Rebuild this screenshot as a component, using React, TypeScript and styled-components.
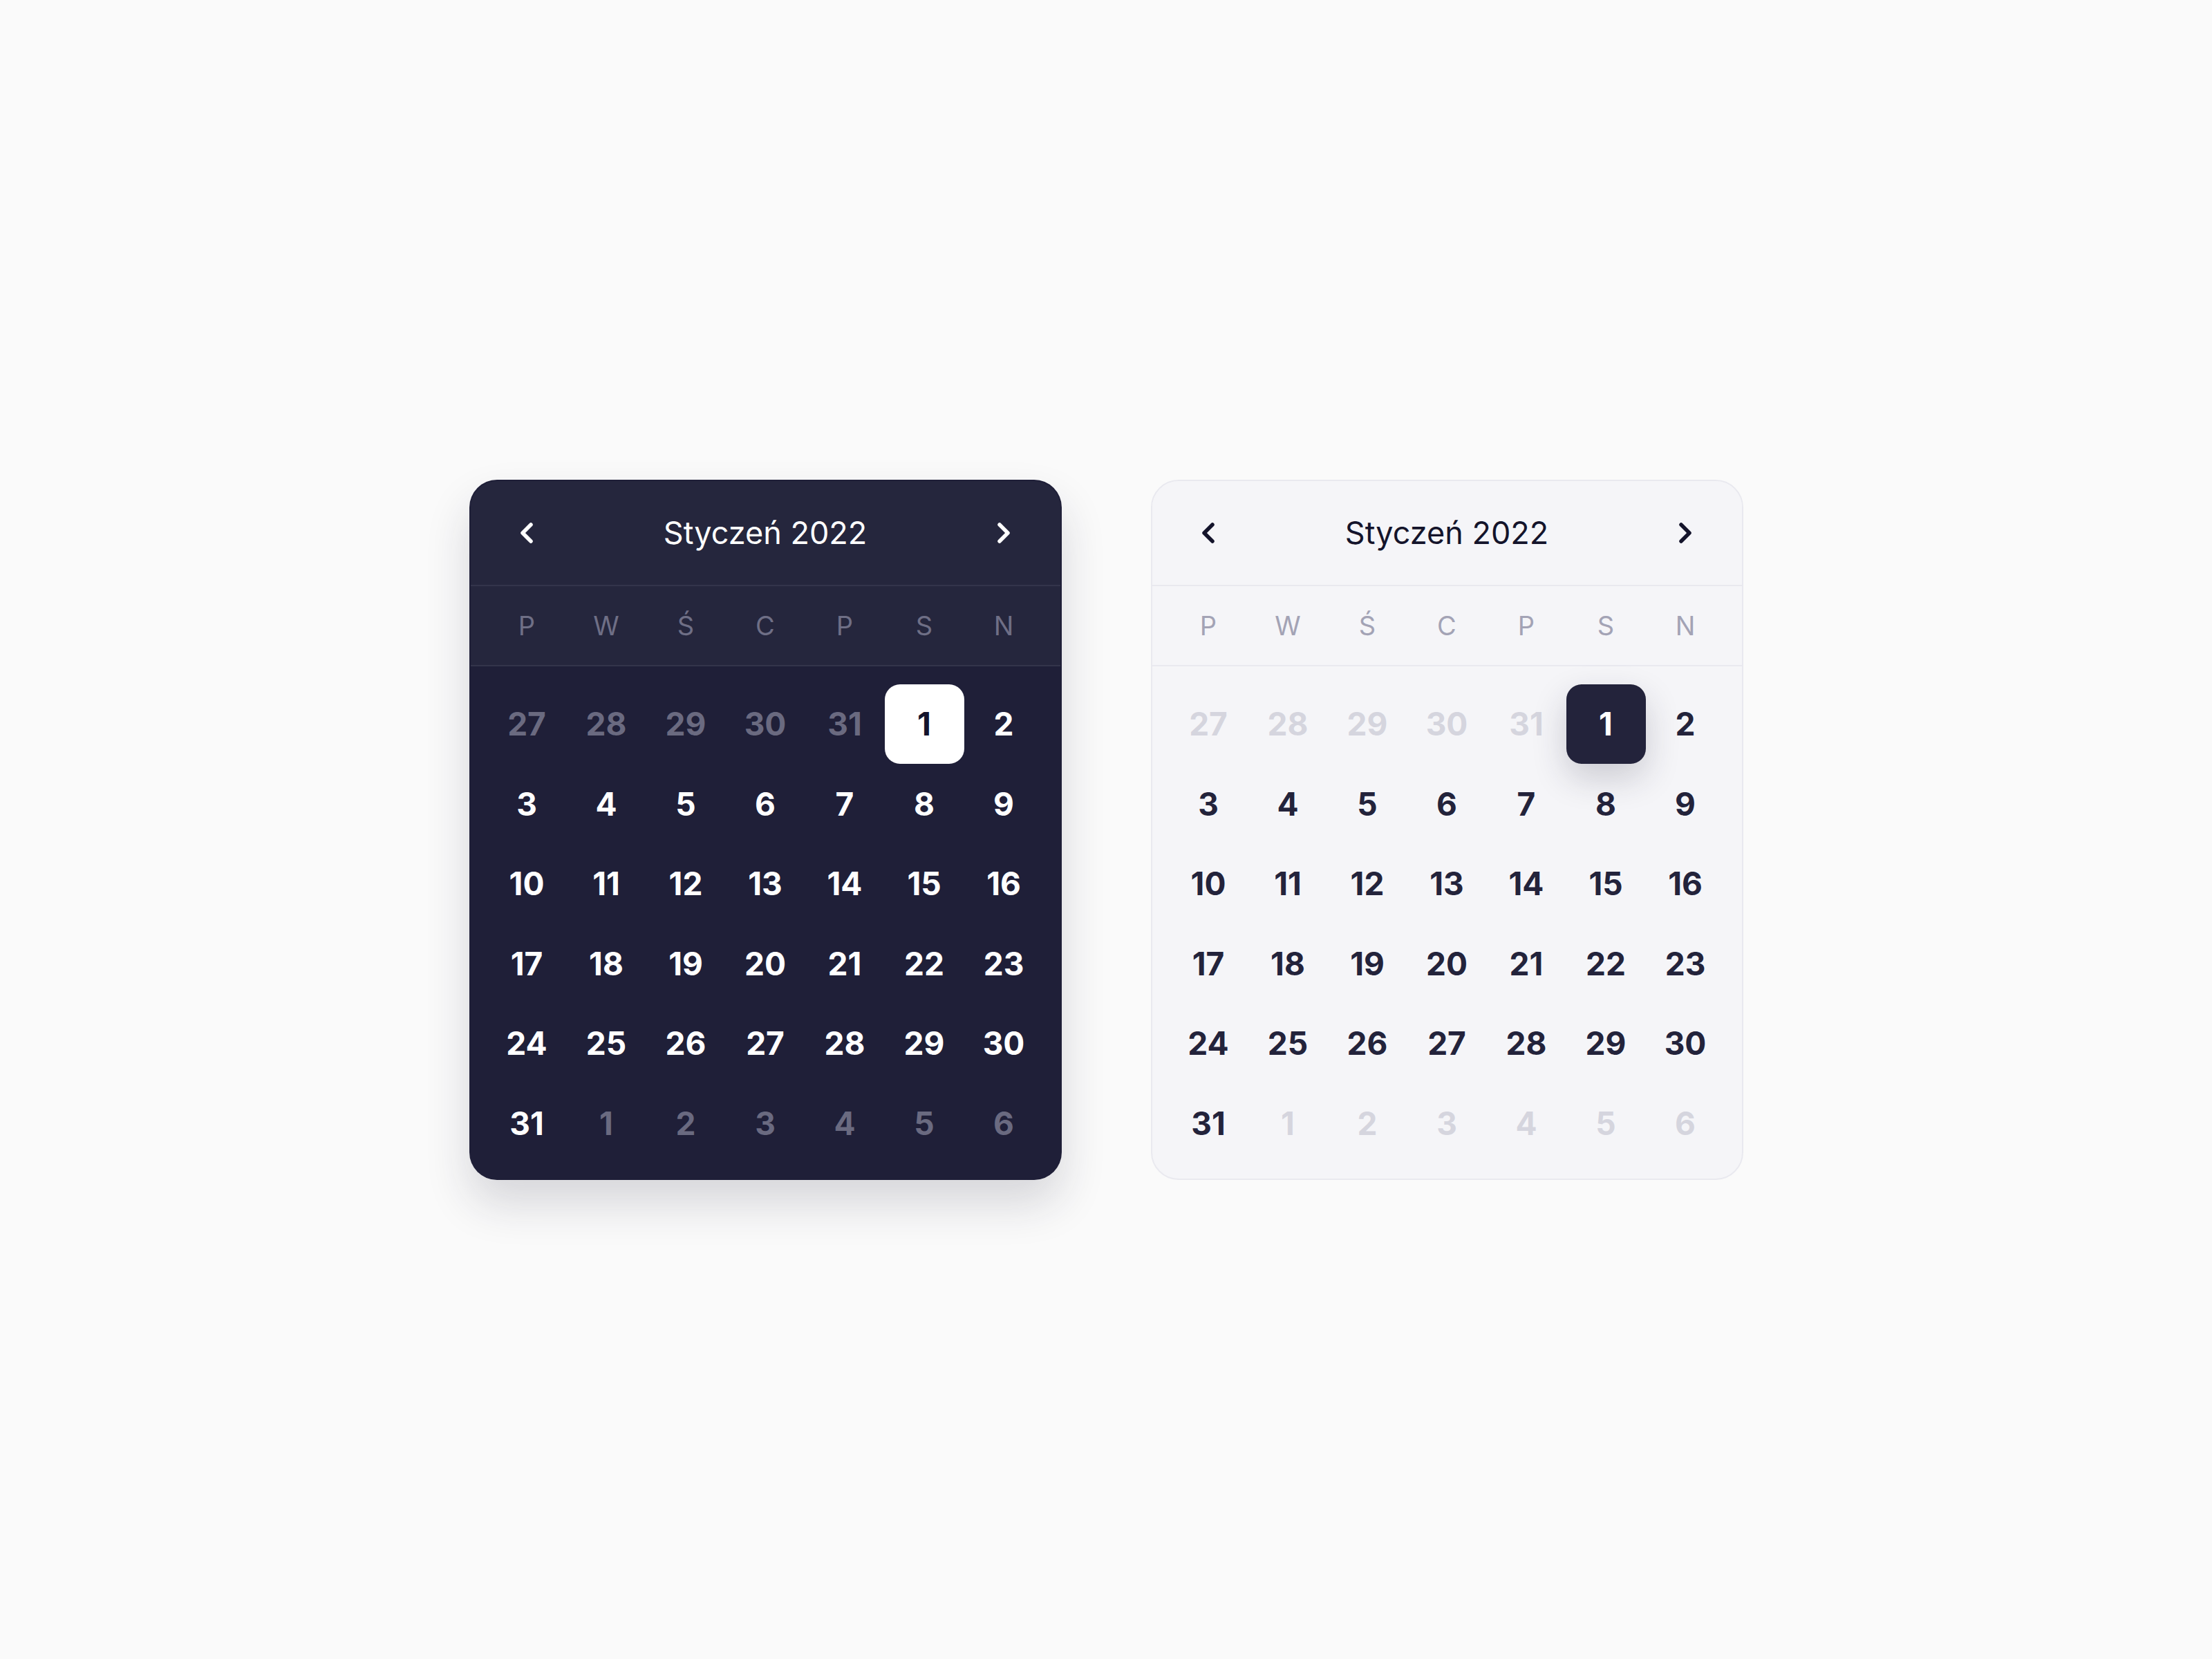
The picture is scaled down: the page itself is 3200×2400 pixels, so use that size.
import React from "react"
import styled, { createGlobalStyle, css } from "styled-components"

type Tone = "dark" | "light"

const palette = {
    dark: {
        card: "#1f1f38",
        head: "#25263d",
        line: "#33344b",
        edge: "transparent",
        title: "#ffffff",
        weekday: "#6f6f86",
        day: "#ffffff",
        muted: "#6a6a80",
        pickBg: "#ffffff",
        pickText: "#14142b",
        pickShadow: "none",
        shadow: "0 34px 64px rgba(31, 31, 56, 0.16)",
    },
    light: {
        card: "#f5f5f8",
        head: "#f5f5f8",
        line: "#e9e9ef",
        edge: "#e9e9ef",
        title: "#14142b",
        weekday: "#a3a3b5",
        day: "#23233b",
        muted: "#d5d5de",
        pickBg: "#23233b",
        pickText: "#ffffff",
        pickShadow: "0 20px 50px rgba(35, 35, 59, 0.2)",
        shadow: "none",
    },
}

const GlobalStyle = createGlobalStyle`
    html, body {
        margin: 0;
        padding: 0;
        background: #fafafa;
    }
    body {
        font-family: Inter, "Noto Sans", "Liberation Sans", sans-serif;
    }
`

const Page = styled.main`
    min-height: 100vh;
    display: flex;
    justify-content: center;
    align-items: center;
    gap: 129px;
`

const Card = styled.section<{ $tone: Tone }>`
    width: 857px;
    box-sizing: border-box;
    border-radius: 40px;
    overflow: hidden;
    ${({ $tone }) => css`
        background: ${palette[$tone].card};
        border: 2px solid ${palette[$tone].edge};
        box-shadow: ${palette[$tone].shadow};
    `}
`

const Header = styled.header<{ $tone: Tone }>`
    height: 150px;
    padding: 0 24px;
    display: flex;
    align-items: center;
    background: ${({ $tone }) => palette[$tone].head};
    border-bottom: 2px solid ${({ $tone }) => palette[$tone].line};
`

const NavButton = styled.button<{ $tone: Tone }>`
    width: 115px;
    height: 100px;
    padding: 0;
    border: none;
    background: none;
    display: flex;
    justify-content: center;
    align-items: center;
    color: ${({ $tone }) => palette[$tone].title};
    cursor: pointer;
`

const Title = styled.h2<{ $tone: Tone }>`
    flex: 1;
    margin: 0;
    text-align: center;
    font-size: 45px;
    font-weight: 400;
    color: ${({ $tone }) => palette[$tone].title};
`

const Weekdays = styled.div<{ $tone: Tone }>`
    height: 114px;
    padding: 0 24px;
    display: grid;
    grid-template-columns: repeat(7, 1fr);
    align-items: center;
    background: ${({ $tone }) => palette[$tone].head};
    border-bottom: 2px solid ${({ $tone }) => palette[$tone].line};
`

const Weekday = styled.span<{ $tone: Tone }>`
    text-align: center;
    font-size: 38px;
    font-weight: 400;
    color: ${({ $tone }) => palette[$tone].weekday};
`

const Days = styled.div`
    padding: 26px 24px 22px;
    display: grid;
    grid-template-columns: repeat(7, 1fr);
    grid-auto-rows: 115.5px;
`

const Day = styled.span<{ $tone: Tone; $muted?: boolean; $picked?: boolean }>`
    display: flex;
    justify-content: center;
    align-items: center;
    font-size: 46px;
    font-weight: 700;
    border-radius: 22px;
    color: ${({ $tone, $muted }) => ($muted ? palette[$tone].muted : palette[$tone].day)};
    ${({ $tone, $picked }) =>
        $picked &&
        css`
            background: ${palette[$tone].pickBg};
            color: ${palette[$tone].pickText};
            box-shadow: ${palette[$tone].pickShadow};
        `}
`

const Chevron = ({ dir }: { dir: "left" | "right" }) => (
    <svg width="20" height="32" viewBox="0 0 20 32" fill="none">
        <path
            d={dir === "left" ? "M16 4 L4 16 L16 28" : "M4 4 L16 16 L4 28"}
            stroke="currentColor"
            strokeWidth="5.5"
            strokeLinecap="round"
            strokeLinejoin="round"
        />
    </svg>
)

const weekdays = ["P", "W", "Ś", "C", "P", "S", "N"]

// styczeń 2022 starts on saturday, so the grid begins with the end of december
const cells = [
    ...[27, 28, 29, 30, 31].map((n) => ({ n, muted: true })),
    ...Array.from({ length: 31 }, (_, i) => ({ n: i + 1, muted: false })),
    ...[1, 2, 3, 4, 5, 6].map((n) => ({ n, muted: true })),
]

const Calendar = ({ tone }: { tone: Tone }) => (
    <Card $tone={tone}>
        <Header $tone={tone}>
            <NavButton $tone={tone} aria-label="Poprzedni miesiąc">
                <Chevron dir="left" />
            </NavButton>
            <Title $tone={tone}>Styczeń 2022</Title>
            <NavButton $tone={tone} aria-label="Następny miesiąc">
                <Chevron dir="right" />
            </NavButton>
        </Header>
        <Weekdays $tone={tone}>
            {weekdays.map((d, i) => (
                <Weekday key={i} $tone={tone}>{d}</Weekday>
            ))}
        </Weekdays>
        <Days>
            {cells.map((c, i) => (
                <Day key={i} $tone={tone} $muted={c.muted} $picked={!c.muted && c.n === 1}>
                    {c.n}
                </Day>
            ))}
        </Days>
    </Card>
)

export default function App() {
    return (
        <>
            <GlobalStyle />
            <Page>
                <Calendar tone="dark" />
                <Calendar tone="light" />
            </Page>
        </>
    )
}
